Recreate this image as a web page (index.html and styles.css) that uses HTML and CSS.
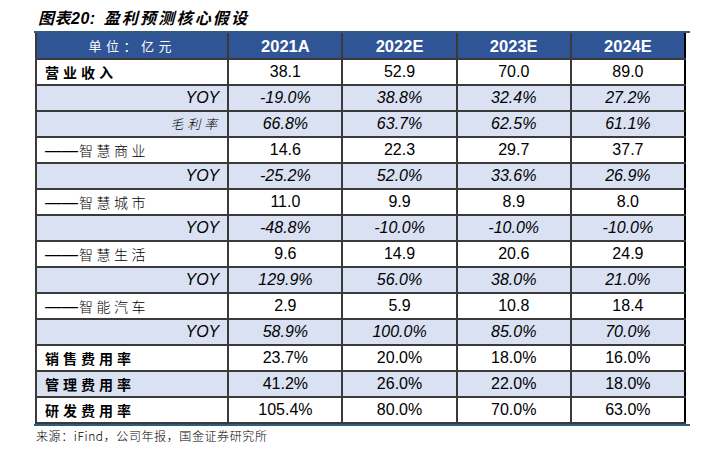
FILE: index.html
```html
<!DOCTYPE html>
<html lang="zh">
<head>
<meta charset="utf-8">
<link rel="stylesheet" href="styles.css">
</head>
<body>
<div class="page">
  <h1 class="title"><span class="num">图表20:</span><span class="tname">盈利预测核心假设</span></h1>
  <div class="frame">
    <table class="tbl">
      <colgroup>
        <col class="c0"><col class="c1"><col class="c1"><col class="c1"><col class="c1">
      </colgroup>
      <thead>
        <tr class="head">
          <th class="unit">单位：亿元</th>
          <th>2021A</th><th>2022E</th><th>2023E</th><th>2024E</th>
        </tr>
      </thead>
      <tbody>
        <tr><td class="lab bold">营业收入</td><td>38.1</td><td>52.9</td><td>70.0</td><td>89.0</td></tr>
        <tr class="alt it"><td class="lab r">YOY</td><td>-19.0%</td><td>38.8%</td><td>32.4%</td><td>27.2%</td></tr>
        <tr class="alt it"><td class="lab r cn">毛利率</td><td>66.8%</td><td>63.7%</td><td>62.5%</td><td>61.1%</td></tr>
        <tr><td class="lab sub"><span class="dash">——</span>智慧商业</td><td>14.6</td><td>22.3</td><td>29.7</td><td>37.7</td></tr>
        <tr class="alt it"><td class="lab r">YOY</td><td>-25.2%</td><td>52.0%</td><td>33.6%</td><td>26.9%</td></tr>
        <tr><td class="lab sub"><span class="dash">——</span>智慧城市</td><td>11.0</td><td>9.9</td><td>8.9</td><td>8.0</td></tr>
        <tr class="alt it"><td class="lab r">YOY</td><td>-48.8%</td><td>-10.0%</td><td>-10.0%</td><td>-10.0%</td></tr>
        <tr><td class="lab sub"><span class="dash">——</span>智慧生活</td><td>9.6</td><td>14.9</td><td>20.6</td><td>24.9</td></tr>
        <tr class="alt it"><td class="lab r">YOY</td><td>129.9%</td><td>56.0%</td><td>38.0%</td><td>21.0%</td></tr>
        <tr><td class="lab sub"><span class="dash">——</span>智能汽车</td><td>2.9</td><td>5.9</td><td>10.8</td><td>18.4</td></tr>
        <tr class="alt it"><td class="lab r">YOY</td><td>58.9%</td><td>100.0%</td><td>85.0%</td><td>70.0%</td></tr>
        <tr><td class="lab bold">销售费用率</td><td>23.7%</td><td>20.0%</td><td>18.0%</td><td>16.0%</td></tr>
        <tr class="alt"><td class="lab bold">管理费用率</td><td>41.2%</td><td>26.0%</td><td>22.0%</td><td>18.0%</td></tr>
        <tr><td class="lab bold">研发费用率</td><td>105.4%</td><td>80.0%</td><td>70.0%</td><td>63.0%</td></tr>
      </tbody>
    </table>
  </div>
  <p class="source">来源：iFind，公司年报，国金证券研究所</p>
</div>
</body>
</html>
```

FILE: styles.css
```css
html, body {
  margin: 0;
  padding: 0;
  background: #ffffff;
}
.page {
  padding: 10px 0 0 34px;
  font-family: "Liberation Sans", "Noto Sans CJK SC", sans-serif;
  color: #000;
}
.title {
  margin: 0 0 3px 4px;
  height: 18px;
  font-size: 16px;
  line-height: 18px;
  font-weight: bold;
  font-style: italic;
  font-family: "Liberation Sans", "Noto Sans CJK SC", sans-serif;
  white-space: nowrap;
}
.title .num {
  letter-spacing: 0.5px;
  margin-right: 8px;
}
.title .tname {
  letter-spacing: 2.2px;
}
.frame {
  width: 656px;
  border-top: 2px solid #2c5c7e;
  border-bottom: 2px solid #2c5c7e;
}
.tbl {
  margin-left: 1px;
  width: 651px;
  border-collapse: collapse;
  table-layout: fixed;
}
.c0 { width: 192px; }
.c1 { width: 114px; }
.tbl th, .tbl td {
  border: 2px solid #3a3a3a;
  padding: 0;
  height: 24px;
  text-align: center;
  vertical-align: middle;
  font-size: 16px;
  line-height: 18px;
  white-space: nowrap;
}
.tbl thead th {
  border-top: none;
  background: #2f5597;
  color: #ffffff;
  font-weight: bold;
  font-size: 16.5px;
  height: 25px;
}
.tbl thead th.unit {
  font-family: "Noto Sans CJK SC", sans-serif;
  font-weight: normal;
  font-size: 13px;
  letter-spacing: 4.5px;
}
.tbl td:last-child, .tbl th:last-child {
  border-right-color: #000;
}
.alt td {
  background: #d9e1f2;
}
.it td {
  font-style: italic;
}
.tbl td.lab {
  text-align: left;
  padding-left: 8px;
  font-family: "Noto Sans CJK SC", sans-serif;
  font-size: 14px;
  letter-spacing: 4px;
}
.tbl td.lab.bold {
  font-weight: bold;
}
.tbl td.lab.sub {
  font-weight: 300;
  letter-spacing: 3.5px;
}
.dash {
  font-family: "Liberation Sans", sans-serif;
  font-size: 16.5px;
  letter-spacing: 0;
  font-weight: normal;
  margin-right: 1px;
}
.tbl td.lab.r {
  text-align: right;
  padding-left: 0;
  padding-right: 8px;
  font-family: "Liberation Sans", sans-serif;
  font-size: 16px;
  letter-spacing: 0;
}
.tbl td.lab.r.cn {
  font-family: "Noto Sans CJK SC", sans-serif;
  font-size: 13px;
  font-weight: 300;
  letter-spacing: 4px;
  padding-right: 6px;
}
.source {
  margin: 2px 0 0 2px;
  font-family: "Noto Sans CJK SC", sans-serif;
  font-size: 12px;
  font-weight: 300;
  line-height: 16px;
  letter-spacing: 0.6px;
}
```
